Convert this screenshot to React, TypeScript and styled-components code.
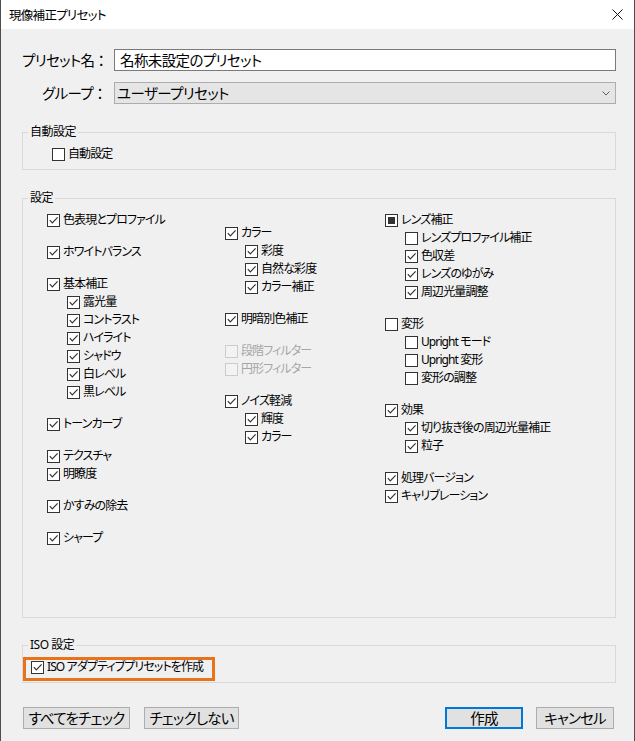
import React from 'react';
import styled, { createGlobalStyle } from 'styled-components';

const GlobalStyle = createGlobalStyle`
  html, body {
    margin: 0;
    padding: 0;
    background: #f0f0f0;
  }

  body {
    font-family: "Noto Sans", "Noto Sans CJK JP", sans-serif;
    font-feature-settings: "palt";
    color: #000;
  }

  * {
    box-sizing: border-box;
  }
`;

const Window = styled.div`
  width: 635px;
  height: 741px;
  display: flex;
  flex-direction: column;
  background: #f0f0f0;
  border-left: 1px solid #4d4d4d;
  border-right: 1px solid #4d4d4d;
`;

const TitleBar = styled.div`
  height: 29px;
  flex: none;
  display: flex;
  align-items: center;
  justify-content: space-between;
  padding: 0 11px 0 8px;
  background: #fff;
  font-size: 12.5px;
  letter-spacing: -0.7px;
`;

const Body = styled.div`
  display: flex;
  flex-direction: column;
  padding: 20px 18px 0 21px;
`;

const FormGrid = styled.div`
  display: grid;
  grid-template-columns: 82px 1fr;
  column-gap: 10px;
  row-gap: 11px;
  align-items: center;
`;

const FieldLabel = styled.label`
  text-align: right;
  font-size: 14.5px;
  line-height: 22px;
  letter-spacing: -0.6px;
  white-space: nowrap;
  padding-right: 1px;
`;

const TextInput = styled.div`
  height: 22px;
  border: 1px solid #7a7a7a;
  background: #fff;
  padding: 0 5px;
  font-size: 14.5px;
  line-height: 20px;
  letter-spacing: -0.6px;
`;

const Select = styled.div`
  height: 22px;
  display: flex;
  align-items: center;
  justify-content: space-between;
  border: 1px solid #adadad;
  background: #e5e5e5;
  padding: 0 5px 0 2px;
  font-size: 14.5px;
  line-height: 20px;
  letter-spacing: -0.6px;
`;

const Group = styled.fieldset<{ $gap: number; $bottom?: number }>`
  margin: ${(p) => p.$gap}px 0 0 0;
  padding: 6px 0 ${(p) => p.$bottom ?? 6}px 0;
  border: 1px solid #d9d9d9;
  min-width: 0;
`;

const Legend = styled.legend`
  margin-left: 5px;
  padding: 0 2px;
  font-size: 12px;
  line-height: 14px;
  letter-spacing: -0.5px;
`;

const GroupContent = styled.div<{ $pad: number }>`
  padding-left: ${(p) => p.$pad}px;
`;

const Columns = styled.div`
  display: grid;
  grid-template-columns: 178px 160px 1fr;
  padding-left: 24px;
`;

const Column = styled.div<{ $offset?: number }>`
  display: flex;
  flex-direction: column;
  gap: 14px;
  padding-top: ${(p) => p.$offset ?? 0}px;
`;

const Block = styled.div`
  display: flex;
  flex-direction: column;
`;

const Row = styled.div<{ $indent?: boolean; $disabled?: boolean }>`
  height: 18px;
  display: flex;
  align-items: center;
  gap: 3px;
  padding-left: ${(p) => (p.$indent ? 20 : 0)}px;
  font-size: 12px;
  line-height: 18px;
  letter-spacing: -0.9px;
  white-space: nowrap;
  color: ${(p) => (p.$disabled ? '#a6a6a6' : '#000')};
`;

const Box = styled.span<{ $disabled?: boolean }>`
  width: 13px;
  height: 13px;
  flex: none;
  display: flex;
  align-items: center;
  justify-content: center;
  border: 1px solid ${(p) => (p.$disabled ? '#cccccc' : '#333333')};
  background: ${(p) => (p.$disabled ? '#f3f3f3' : '#fff')};
`;

const Mixed = styled.span`
  width: 7px;
  height: 7px;
  background: #333;
`;

const HighlightRow = styled.div`
  position: relative;
  padding-left: 8px;
`;

const Highlight = styled.div`
  position: absolute;
  left: 0;
  top: -1px;
  width: 192px;
  height: 24px;
  border: 3px solid #e8731a;
  pointer-events: none;
`;

const ButtonBar = styled.div`
  display: flex;
  justify-content: space-between;
  margin-top: 24px;
  padding-left: 1px;
  padding-right: 2px;
`;

const ButtonGroup = styled.div<{ $gap: number }>`
  display: flex;
  gap: ${(p) => p.$gap}px;
`;

const Button = styled.button<{ $w: number; $primary?: boolean }>`
  width: ${(p) => p.$w}px;
  height: 22px;
  padding: 0;
  background: #e1e1e1;
  border: ${(p) => (p.$primary ? '2px solid #0078d7' : '1px solid #adadad')};
  font-family: inherit;
  font-feature-settings: "palt";
  font-size: 14.5px;
  line-height: 18px;
  letter-spacing: -0.8px;
  color: #000;
`;

type State = 'on' | 'off' | 'mixed';

interface Item {
  label: string;
  state?: State;
  sub?: boolean;
  disabled?: boolean;
}

const CheckBox = ({ state = 'on', disabled }: { state?: State; disabled?: boolean }) => (
  <Box $disabled={disabled}>
    {state === 'on' && (
      <svg width="11" height="11" viewBox="0 0 11 11">
        <path d="M1.8 5.2 L4.3 7.8 L9.6 2.4" fill="none" stroke="#333" strokeWidth="1.2" />
      </svg>
    )}
    {state === 'mixed' && <Mixed />}
  </Box>
);

const Check = ({ item }: { item: Item }) => (
  <Row $indent={item.sub} $disabled={item.disabled}>
    <CheckBox state={item.disabled ? 'off' : item.state} disabled={item.disabled} />
    <span>{item.label}</span>
  </Row>
);

const sub = (label: string, state: State = 'on'): Item => ({ label, state, sub: true });

const col1: Item[][] = [
  [{ label: '色表現とプロファイル' }],
  [{ label: 'ホワイトバランス' }],
  [
    { label: '基本補正' },
    sub('露光量'),
    sub('コントラスト'),
    sub('ハイライト'),
    sub('シャドウ'),
    sub('白レベル'),
    sub('黒レベル'),
  ],
  [{ label: 'トーンカーブ' }],
  [{ label: 'テクスチャ' }, { label: '明瞭度' }],
  [{ label: 'かすみの除去' }],
  [{ label: 'シャープ' }],
];

const col2: Item[][] = [
  [{ label: 'カラー' }, sub('彩度'), sub('自然な彩度'), sub('カラー補正')],
  [{ label: '明暗別色補正' }],
  [
    { label: '段階フィルター', disabled: true },
    { label: '円形フィルター', disabled: true },
  ],
  [{ label: 'ノイズ軽減' }, sub('輝度'), sub('カラー')],
];

const col3: Item[][] = [
  [
    { label: 'レンズ補正', state: 'mixed' },
    sub('レンズプロファイル補正', 'off'),
    sub('色収差'),
    sub('レンズのゆがみ'),
    sub('周辺光量調整'),
  ],
  [
    { label: '変形', state: 'off' },
    sub('Upright モード', 'off'),
    sub('Upright 変形', 'off'),
    sub('変形の調整', 'off'),
  ],
  [{ label: '効果' }, sub('切り抜き後の周辺光量補正'), sub('粒子')],
  [{ label: '処理バージョン' }, { label: 'キャリブレーション' }],
];

const renderColumn = (blocks: Item[][]) =>
  blocks.map((block, i) => (
    <Block key={i}>
      {block.map((item) => (
        <Check key={item.label} item={item} />
      ))}
    </Block>
  ));

const App = () => {
  return (
    <>
      <GlobalStyle />
      <Window>
        <TitleBar>
          <span>現像補正プリセット</span>
          <svg width="11" height="11" viewBox="0 0 11 11">
            <path d="M0.5 0.5 L10.5 10.5 M10.5 0.5 L0.5 10.5" stroke="#111" strokeWidth="1" />
          </svg>
        </TitleBar>
        <Body>
          <FormGrid>
            <FieldLabel>プリセット名 ：</FieldLabel>
            <TextInput>名称未設定のプリセット</TextInput>
            <FieldLabel>グループ ：</FieldLabel>
            <Select>
              <span>ユーザープリセット</span>
              <svg width="8" height="5" viewBox="0 0 8 5">
                <path d="M0.5 0.5 L4 4 L7.5 0.5" fill="none" stroke="#606060" strokeWidth="1" />
              </svg>
            </Select>
          </FormGrid>

          <Group $gap={21}>
            <Legend>自動設定</Legend>
            <GroupContent $pad={29}>
              <Check item={{ label: '自動設定', state: 'off' }} />
            </GroupContent>
          </Group>

          <Group $gap={21} $bottom={70}>
            <Legend>設定</Legend>
            <Columns>
              <Column>{renderColumn(col1)}</Column>
              <Column $offset={13}>{renderColumn(col2)}</Column>
              <Column>{renderColumn(col3)}</Column>
            </Columns>
          </Group>

          <Group $gap={20}>
            <Legend>ISO 設定</Legend>
            <HighlightRow>
              <Check item={{ label: 'ISO アダプティブプリセットを作成' }} />
              <Highlight />
            </HighlightRow>
          </Group>

          <ButtonBar>
            <ButtonGroup $gap={14}>
              <Button $w={107}>すべてをチェック</Button>
              <Button $w={95}>チェックしない</Button>
            </ButtonGroup>
            <ButtonGroup $gap={13}>
              <Button $w={78} $primary>
                作成
              </Button>
              <Button $w={78}>キャンセル</Button>
            </ButtonGroup>
          </ButtonBar>
        </Body>
      </Window>
    </>
  );
};

export default App;
